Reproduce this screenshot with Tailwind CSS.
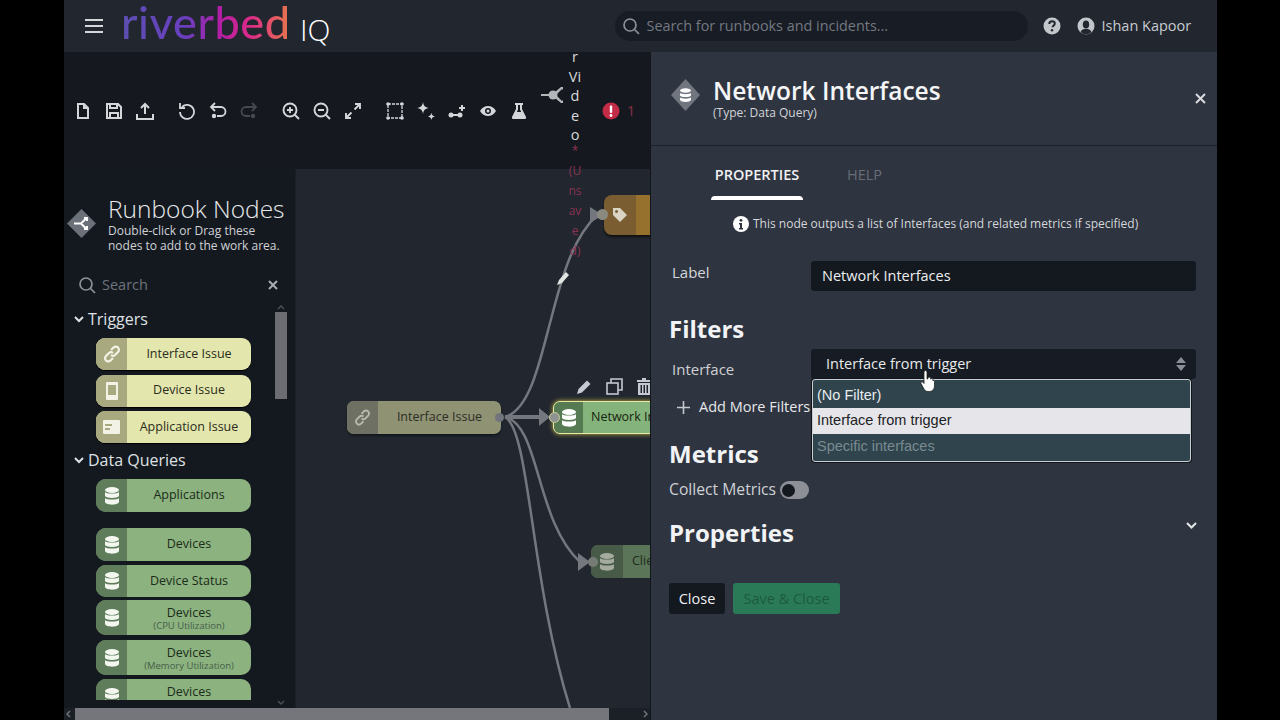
<!DOCTYPE html>
<html lang="en">
<head>
  <meta charset="UTF-8" />
  <title>Riverbed IQ - Runbook editor</title>
  <script src="https://cdn.jsdelivr.net/npm/@tailwindcss/browser@4"></script>
</head>
<body class="bg-black">
<div class="w-[1280px] h-[720px] overflow-hidden bg-black pl-[64px] relative font-['Open_Sans',sans-serif]">
  <div class="w-[1153px] h-[720px] flex flex-col">

    <!-- top bar -->
    <header class="h-[52px] shrink-0 bg-[#21262f] flex items-center">
      <svg class="ml-[21px] w-[18px] h-[14px] text-[#d5d7db]" viewBox="0 0 18 14" fill="currentColor"><rect y="0" width="18" height="2"/><rect y="6" width="18" height="2"/><rect y="12" width="18" height="2"/></svg>
      <div class="ml-[18px] w-[177px] flex items-baseline h-[52px]">
        <span class="text-[45px] leading-[45px] tracking-[0.6px] font-medium font-['Lato',sans-serif] bg-[linear-gradient(90deg,#5a4fb0_0%,#6a3fc0_38%,#b31ea6_58%,#dc2a88_76%,#e8784a_100%)] bg-clip-text text-transparent">riverbed</span>
      </div>
      <span class="ml-[2px] mt-[8px] text-[30px] font-light leading-none text-white">IQ</span>
      <div class="ml-[285px] w-[413px] h-[30px] rounded-full bg-[#181c24] flex items-center pl-[7px]">
        <svg class="w-[18px] h-[18px] text-[#8b9099]" viewBox="0 0 18 18" fill="none" stroke="currentColor" stroke-width="1.7"><circle cx="8" cy="8" r="6"/><path d="M12.5 12.5 17 17"/></svg>
        <span class="ml-[6px] text-[14.400px] text-[#737882]">Search for runbooks and incidents...</span>
      </div>
      <svg class="ml-[15px] w-[18px] h-[18px]" viewBox="0 0 18 18"><circle cx="9" cy="9" r="8.5" fill="#c3c6cb"/><path d="M6.3 7c0-1.700 1.200-2.700 2.800-2.700s2.700.9 2.700 2.300c0 1.900-2.200 1.900-2.200 3.700" fill="none" stroke="#21262f" stroke-width="2"/><circle cx="9" cy="13.300" r="1.200" fill="#21262f"/></svg>
      <svg class="ml-[16px] w-[18px] h-[18px]" viewBox="0 0 18 18"><circle cx="9" cy="9" r="8.500" fill="#c3c6cb"/><ellipse cx="9" cy="7.500" rx="3.200" ry="4" fill="#21262f"/><path d="M3.500 15c1-2.500 3-3 5.500-3s4.500.5 5.500 3a8 8 0 0 1-11 0" fill="#21262f"/></svg>
      <span class="ml-[6px] text-[14.5px] text-[#c8cbd0]">Ishan Kapoor</span>
    </header>

    <div class="flex-1 flex min-h-0">
      <!-- left side: toolbar, node list, canvas -->
      <div class="w-[586px] shrink-0 flex flex-col relative">
        <div class="h-[117px] shrink-0 bg-[#15191f] flex items-center pl-[3px] text-[#d4d6da]">
          <div class="flex w-[31px] justify-center"><svg class="w-[18px] h-[18px]" viewBox="0 0 18 18" fill="none" stroke="currentColor" stroke-width="2"><path d="M4 2h6l4 4v10H4zM10 2v4h4"/></svg></div>
          <div class="flex w-[31px] justify-center"><svg class="w-[18px] h-[18px]" viewBox="0 0 18 18" fill="none" stroke="currentColor" stroke-width="2"><path d="M2 2h11l3 3v11H2zM5 2v4h7V2M5 16v-5h8v5"/></svg></div>
          <div class="flex w-[31px] justify-center"><svg class="w-[18px] h-[18px]" viewBox="0 0 18 18" fill="none" stroke="currentColor" stroke-width="2"><path d="M9 12V2M5 6l4-4 4 4M1 12v5h16v-5"/></svg></div>
          <div class="flex w-[31px] ml-[11px] justify-center"><svg class="w-[18px] h-[18px]" viewBox="0 0 18 18" fill="none" stroke="currentColor" stroke-width="1.800"><path d="M4 5a7 7 0 1 1-2 5M2 1v5h5"/></svg></div>
          <div class="flex w-[31px] justify-center"><svg class="w-[18px] h-[18px]" viewBox="0 0 18 18" fill="none" stroke="currentColor" stroke-width="1.800"><path d="M6 1 2 5l4 4M2 5h10a4 4 0 0 1 0 9H8"/><circle cx="5" cy="14" r="1.300" fill="currentColor"/></svg></div>
          <div class="flex w-[31px] justify-center text-[#454a50]"><svg class="w-[18px] h-[18px]" viewBox="0 0 18 18" fill="none" stroke="currentColor" stroke-width="1.800"><path d="m12 1 4 4-4 4M16 5H6a4 4 0 0 0 0 9h4"/><circle cx="13" cy="14" r="1.300" fill="currentColor"/></svg></div>
          <div class="flex w-[31px] ml-[11px] justify-center"><svg class="w-[18px] h-[18px]" viewBox="0 0 18 18" fill="none" stroke="currentColor" stroke-width="1.900"><circle cx="8" cy="8" r="6.500"/><path d="M12.500 12.500 17 17M8 5v6M5 8h6"/></svg></div>
          <div class="flex w-[31px] justify-center"><svg class="w-[18px] h-[18px]" viewBox="0 0 18 18" fill="none" stroke="currentColor" stroke-width="1.900"><circle cx="8" cy="8" r="6.500"/><path d="M12.500 12.500 17 17M5 8h6"/></svg></div>
          <div class="flex w-[31px] justify-center"><svg class="w-[18px] h-[18px]" viewBox="0 0 18 18" fill="none" stroke="currentColor" stroke-width="1.900"><path d="M11 2h5v5M16 2l-5.500 5.500M7 16H2v-5M2 16l5.500-5.500"/></svg></div>
          <div class="flex w-[31px] ml-[11px] justify-center"><svg class="w-[18px] h-[18px]" viewBox="0 0 18 18" fill="currentColor"><path d="M2 2h14v14H2z" fill="none" stroke="currentColor" stroke-width="1.300" stroke-dasharray="3 1"/><circle cx="2" cy="2" r="1.800"/><circle cx="16" cy="2" r="1.800"/><circle cx="2" cy="16" r="1.800"/><circle cx="16" cy="16" r="1.800"/></svg></div>
          <div class="flex w-[31px] justify-center"><svg class="w-[18px] h-[18px]" viewBox="1 1 15 15" fill="currentColor"><path d="M6 1c.6 3.400 1.600 4.400 5 5-3.400.6-4.400 1.600-5 5-.6-3.400-1.600-4.400-5-5 3.400-.6 4.400-1.600 5-5zM13 10c.4 2 1 2.600 3 3-2 .4-2.600 1-3 3-.4-2-1-2.600-3-3 2-.4 2.600-1 3-3z"/></svg></div>
          <div class="flex w-[31px] justify-center"><svg class="w-[18px] h-[18px]" viewBox="0 0 18 18" fill="currentColor"><circle cx="3" cy="13" r="2.500"/><circle cx="12" cy="13" r="2.500"/><rect x="3" y="12" width="9" height="2"/><path d="M13 3h2v2h2v2h-2v2h-2V7h-2V5h2z"/></svg></div>
          <div class="flex w-[31px] justify-center"><svg class="w-[18px] h-[18px]" viewBox="0 0 18 18"><path d="M1 9c2-3.500 4.800-5 8-5s6 1.500 8 5c-2 3.500-4.800 5-8 5s-6-1.500-8-5z" fill="currentColor"/><circle cx="9" cy="9" r="3" fill="#15191f"/><circle cx="9" cy="9" r="1.500" fill="currentColor"/></svg></div>
          <div class="flex w-[31px] justify-center"><svg class="w-[18px] h-[18px]" viewBox="0 0 18 18" fill="currentColor"><path d="M5 1h8v2h-1v4l4 8c.4 1-.2 2-1.200 2H3.200C2.200 17 1.600 16 2 15l4-8V3H5zM8 3v4.500L6.800 10h4.400L10 7.500V3z"/></svg></div>
          <div class="flex w-[24px] ml-[6px] mb-[31px] justify-center text-[#b4b6ba]"><svg class="w-[24px] h-[22px] shrink-0" viewBox="0 0 24 22" fill="currentColor"><rect x="1" y="10" width="8" height="2"/><circle cx="13" cy="11" r="4.500"/><path d="M15 8 21 3h2v3l-1-1-5 5zM15 14l6 5h2v-3l-1 1-5-5z"/></svg></div>
          <div class="w-[38px]"></div>
          <svg class="w-[18px] h-[18px]" viewBox="0 0 18 18"><circle cx="9" cy="9" r="8.500" fill="#c42b46"/><rect x="7.800" y="3.500" width="2.400" height="7.500" rx="1" fill="#fff"/><circle cx="9" cy="13.500" r="1.400" fill="#fff"/></svg>
          <span class="ml-[7px] text-[14px] text-[#8c2f48]">1</span>
        </div>

        <div class="flex-1 flex min-h-0">
          <!-- node palette -->
          <aside class="w-[231px] shrink-0 bg-[#141920] flex flex-col relative overflow-hidden">
            <div class="flex items-start pl-[3px] pt-[28px]">
              <svg class="mt-[12px] w-[29px] h-[29px]" viewBox="0 0 29 29"><path d="M14.500 0 29 14.500 14.500 29 0 14.500z" fill="#6c7078"/><path d="M7 14.500h7M14 14.500l5-5M14 14.500l5 5M17 9h3v3M17 20h3v-3" stroke="#fff" stroke-width="2" fill="none"/></svg>
              <div class="ml-[12px]">
                <div class="text-[24.500px] leading-[24px] font-light text-[#e8e9eb]">Runbook Nodes</div>
                <div class="mt-[2px] text-[12px] leading-[15px] text-[#d0d2d6]">Double-click or Drag these<br>nodes to add to the work area.</div>
              </div>
            </div>
            <div class="mt-[20px] ml-[14px] w-[200px] flex items-center h-[24px]">
              <svg class="w-[18px] h-[18px] text-[#8b9099]" viewBox="0 0 18 18" fill="none" stroke="currentColor" stroke-width="1.700"><circle cx="8" cy="8" r="6"/><path d="M12.500 12.500 17 17"/></svg>
              <span class="ml-[6px] text-[14.500px] text-[#6e737c]">Search</span>
              <svg class="ml-auto w-[10px] h-[10px] text-[#a9acb2]" viewBox="0 0 10 10" stroke="currentColor" stroke-width="2"><path d="m1 1 8 8M9 1l-8 8"/></svg>
            </div>
            <div class="mt-[10px] h-[393px] shrink-0 overflow-hidden pl-[10px] w-[211px]">
              <div class="flex items-center h-[24px] text-[16px] text-[#dfe1e4]">
                <svg class="w-[10px] h-[7px] mr-[4px]" viewBox="0 0 10 7" fill="none" stroke="currentColor" stroke-width="2"><path d="m1 1 4 4 4-4"/></svg>Triggers
              </div>
              <div class="ml-[22px] w-[155px] mt-[7px] flex flex-col gap-[4.500px] text-[12.500px]">
                <div class="h-[32px] flex rounded-[9px] overflow-hidden bg-[#e3e6ad] text-[#2b2c20] shadow-[0_1px_1px_#000]">
                  <div class="w-[31px] shrink-0 bg-[#a8a97e] flex items-center justify-center"><svg class="w-[18px] h-[18px]" viewBox="0 0 18 18" fill="none" stroke="#f2f2e6" stroke-width="2.200"><path d="M8 5l2.500-2.500a3 3 0 0 1 4.500 4.500l-3 3a3 3 0 0 1-4 0M10 13l-2.500 2.500a3 3 0 0 1-4.500-4.500l3-3a3 3 0 0 1 4 0"/></svg></div>
                  <div class="flex-1 flex items-center justify-center">Interface Issue</div>
                </div>
                <div class="h-[32px] flex rounded-[9px] overflow-hidden bg-[#e3e6ad] text-[#2b2c20] shadow-[0_1px_1px_#000]">
                  <div class="w-[31px] shrink-0 bg-[#a8a97e] flex items-center justify-center"><svg class="w-[12px] h-[18px]" viewBox="0 0 12 18" fill="#f2f2e6"><path d="M1 0h10a1 1 0 0 1 1 1v16a1 1 0 0 1-1 1H1a1 1 0 0 1-1-1V1a1 1 0 0 1 1-1zm1 3v10h8V3z" fill-rule="evenodd"/></svg></div>
                  <div class="flex-1 flex items-center justify-center">Device Issue</div>
                </div>
                <div class="h-[32px] flex rounded-[9px] overflow-hidden bg-[#e3e6ad] text-[#2b2c20] shadow-[0_1px_1px_#000]">
                  <div class="w-[31px] shrink-0 bg-[#a8a97e] flex items-center justify-center"><svg class="w-[17px] h-[14px]" viewBox="0 0 17 14"><rect width="17" height="14" rx="1" fill="#f2f2e6"/><rect x="2" y="4" width="7" height="2" fill="#a8a97e"/><rect x="2" y="8" width="5" height="2" fill="#a8a97e"/></svg></div>
                  <div class="flex-1 flex items-center justify-center">Application Issue</div>
                </div>
              </div>
              <div class="mt-[5px] flex items-center h-[24px] text-[16px] text-[#dfe1e4]">
                <svg class="w-[10px] h-[7px] mr-[4px]" viewBox="0 0 10 7" fill="none" stroke="currentColor" stroke-width="2"><path d="m1 1 4 4 4-4"/></svg>Data Queries
              </div>
              <div class="ml-[22px] w-[155px] mt-[7px] flex flex-col gap-[4px] text-[12.500px] text-[#1b2c1a]">
                <div class="h-[33px] mb-[12px] flex rounded-[10px] overflow-hidden bg-[#8cb27f]">
                  <div class="w-[31px] shrink-0 bg-[#5f7d5a] flex items-center justify-center"><svg class="w-[14px] h-[18px]" viewBox="0 0 14 18" fill="#f4f7f0"><ellipse cx="7" cy="3" rx="7" ry="3"/><path d="M0 5c1 2 13 2 14 0v4c-1 2.500-13 2.500-14 0zM0 11c1 2 13 2 14 0v4c-1 3.500-13 3.500-14 0z"/></svg></div>
                  <div class="flex-1 flex items-center justify-center">Applications</div>
                </div>
                <div class="h-[33px] flex rounded-[10px] overflow-hidden bg-[#8cb27f]">
                  <div class="w-[31px] shrink-0 bg-[#5f7d5a] flex items-center justify-center"><svg class="w-[14px] h-[18px]" viewBox="0 0 14 18" fill="#f4f7f0"><ellipse cx="7" cy="3" rx="7" ry="3"/><path d="M0 5c1 2 13 2 14 0v4c-1 2.500-13 2.500-14 0zM0 11c1 2 13 2 14 0v4c-1 3.500-13 3.500-14 0z"/></svg></div>
                  <div class="flex-1 flex items-center justify-center">Devices</div>
                </div>
                <div class="h-[32px] flex rounded-[10px] overflow-hidden bg-[#8cb27f]">
                  <div class="w-[31px] shrink-0 bg-[#5f7d5a] flex items-center justify-center"><svg class="w-[14px] h-[18px]" viewBox="0 0 14 18" fill="#f4f7f0"><ellipse cx="7" cy="3" rx="7" ry="3"/><path d="M0 5c1 2 13 2 14 0v4c-1 2.500-13 2.500-14 0zM0 11c1 2 13 2 14 0v4c-1 3.500-13 3.500-14 0z"/></svg></div>
                  <div class="flex-1 flex items-center justify-center">Device Status</div>
                </div>
                <div class="h-[35px] mt-[-1px] mb-[1px] flex rounded-[10px] overflow-hidden bg-[#8cb27f]">
                  <div class="w-[31px] shrink-0 bg-[#5f7d5a] flex items-center justify-center"><svg class="w-[14px] h-[18px]" viewBox="0 0 14 18" fill="#f4f7f0"><ellipse cx="7" cy="3" rx="7" ry="3"/><path d="M0 5c1 2 13 2 14 0v4c-1 2.500-13 2.500-14 0zM0 11c1 2 13 2 14 0v4c-1 3.500-13 3.500-14 0z"/></svg></div>
                  <div class="flex-1 flex flex-col items-center justify-center leading-[15px]">Devices<span class="text-[9.500px] leading-[11px] text-[#466048]">(CPU Utilization)</span></div>
                </div>
                <div class="h-[35px] flex rounded-[10px] overflow-hidden bg-[#8cb27f]">
                  <div class="w-[31px] shrink-0 bg-[#5f7d5a] flex items-center justify-center"><svg class="w-[14px] h-[18px]" viewBox="0 0 14 18" fill="#f4f7f0"><ellipse cx="7" cy="3" rx="7" ry="3"/><path d="M0 5c1 2 13 2 14 0v4c-1 2.500-13 2.500-14 0zM0 11c1 2 13 2 14 0v4c-1 3.500-13 3.500-14 0z"/></svg></div>
                  <div class="flex-1 flex flex-col items-center justify-center leading-[15px]">Devices<span class="text-[9.500px] leading-[11px] text-[#466048]">(Memory Utilization)</span></div>
                </div>
                <div class="h-[35px] flex rounded-[10px] overflow-hidden bg-[#8cb27f]">
                  <div class="w-[31px] shrink-0 bg-[#5f7d5a] flex items-center justify-center"><svg class="w-[14px] h-[18px]" viewBox="0 0 14 18" fill="#f4f7f0"><ellipse cx="7" cy="3" rx="7" ry="3"/><path d="M0 5c1 2 13 2 14 0v4c-1 2.500-13 2.500-14 0zM0 11c1 2 13 2 14 0v4c-1 3.500-13 3.500-14 0z"/></svg></div>
                  <div class="flex-1 flex flex-col items-center pt-[5px] leading-[15px]">Devices</div>
                </div>
              </div>
            </div>
            <!-- palette scrollbar -->
            <div class="absolute left-[211px] top-[136px] w-[12px] h-[400px] flex flex-col items-center">
              <svg class="w-[8px] h-[5px] text-[#4a4e55]" viewBox="0 0 8 5" fill="none" stroke="currentColor" stroke-width="1.500"><path d="m1 4 3-3 3 3"/></svg>
              <div class="mt-[2px] w-[12px] h-[87px] bg-[#6b6d73]"></div>
              <svg class="mt-auto w-[8px] h-[5px] text-[#4a4e55]" viewBox="0 0 8 5" fill="none" stroke="currentColor" stroke-width="1.500"><path d="m1 1 3 3 3-3"/></svg>
            </div>
          </aside>

          <!-- canvas -->
          <div class="flex-1 bg-[#21262f] relative overflow-hidden border-l border-[#1a1e25]">
            <svg class="absolute left-0 top-0 w-[354px] h-[539px]" viewBox="296 169 354 539" fill="none" stroke="#74777e" stroke-width="2.500">
              <path d="M505 417C530 410 540 360 550 323S570 240 598 214"/>
              <path d="M505 417H540" stroke-width="4"/>
              <path d="M505 417C540 425 535 520 580 562"/>
              <path d="M505 417C530 430 530 580 570 708"/>
              <path d="M590 207 603 215 590 223z" fill="#74777e" stroke="none"/>
              <path d="M539 408 550 417 539 426z" fill="#74777e" stroke="none"/>
              <path d="M578 553 590 562 578 571z" fill="#74777e" stroke="none"/>
            </svg>

            <div class="absolute left-[308px] top-[26px] w-[60px] h-[40px] flex rounded-[8px] overflow-hidden shadow-[0_2px_2px_#111]">
              <div class="w-[32px] shrink-0 bg-[#7a5d30] flex items-center justify-center"><svg class="w-[16px] h-[16px]" viewBox="0 0 16 16" fill="#d9d4c4"><path d="M1 1h7l7 7-7 7-7-7zM4.500 3a1.500 1.500 0 1 0 .01 0z" fill-rule="evenodd"/></svg></div>
              <div class="flex-1 bg-[#96702d]"></div>
            </div>
            <div class="absolute left-[301px] top-[40px] w-[11px] h-[11px] rounded-full bg-[#8b8a80]"></div>

            <svg class="absolute left-[260px] top-[101px] w-[16px] h-[16px]" viewBox="0 0 16 16"><path d="M1 15l2-5 7-8 3 3-7 8z" fill="#e0e4e2"/></svg>

            <div class="absolute left-[51px] top-[232px] w-[154px] h-[33px] flex rounded-[7px] overflow-hidden bg-[#8f9273] text-[#2c2d25] text-[12.500px] shadow-[0_2px_2px_#15181e]">
              <div class="w-[31px] shrink-0 bg-[#6d7062] flex items-center justify-center"><svg class="w-[17px] h-[17px]" viewBox="0 0 18 18" fill="none" stroke="#b8b9ab" stroke-width="2"><path d="M8 5l2.500-2.500a3 3 0 0 1 4.500 4.500l-3 3a3 3 0 0 1-4 0M10 13l-2.500 2.500a3 3 0 0 1-4.500-4.500l3-3a3 3 0 0 1 4 0"/></svg></div>
              <div class="flex-1 flex items-center justify-center">Interface Issue</div>
            </div>
            <div class="absolute left-[199px] top-[244px] w-[9px] h-[9px] rounded-full bg-[#71747b]"></div>

            <div class="absolute left-[280px] top-[209px] w-[82px] flex items-center gap-[14px] text-[#c5c9d2]">
              <svg class="w-[16px] h-[16px] shrink-0" viewBox="0 0 16 16" fill="currentColor"><path d="M1 15l1.500-5L11 1.500l3.500 3.500L6 13.500z"/></svg>
              <svg class="w-[17px] h-[17px] shrink-0" viewBox="0 0 17 17" fill="none" stroke="currentColor" stroke-width="1.600"><rect x="1" y="5" width="11" height="11"/><path d="M5 5V1h11v11h-4"/></svg>
              <svg class="w-[14px] h-[17px] shrink-0" viewBox="0 0 14 17" fill="currentColor"><rect y="2" width="14" height="2"/><rect x="5" width="4" height="2"/><path d="M1 5h12v12H1zM3.500 7v8h1.500V7zM6.500 7v8h1.500V7zM9.500 7v8h1.500V7z" fill-rule="evenodd"/></svg>
            </div>

            <div class="absolute left-[257px] top-[232px] w-[110px] h-[33px] flex rounded-[7px] overflow-hidden bg-[#85b37c] border border-[#e9eaa2] shadow-[0_0_5px_#c8b84a] text-[12.500px] text-[#16240f]">
              <div class="w-[29px] shrink-0 bg-[#567a52] flex items-center justify-center"><svg class="w-[14px] h-[18px]" viewBox="0 0 14 18" fill="#fff"><ellipse cx="7" cy="3" rx="7" ry="3"/><path d="M0 5c1 2 13 2 14 0v4c-1 2.500-13 2.500-14 0zM0 11c1 2 13 2 14 0v4c-1 3.500-13 3.500-14 0z"/></svg></div>
              <div class="pl-[8px] flex items-center whitespace-nowrap">Network Interfaces</div>
            </div>
            <div class="absolute left-[253px] top-[243px] w-[11px] h-[11px] rounded-full bg-[#8f9490] border border-[#c9ca9d]"></div>

            <div class="absolute left-[295px] top-[376px] w-[70px] h-[33px] flex rounded-[7px] overflow-hidden bg-[#5a7557] text-[12.500px] text-[#202b1e]">
              <div class="w-[32px] shrink-0 bg-[#475b48] flex items-center justify-center"><svg class="w-[14px] h-[18px]" viewBox="0 0 14 18" fill="#a5ac9f"><ellipse cx="7" cy="3" rx="7" ry="3"/><path d="M0 5c1 2 13 2 14 0v4c-1 2.500-13 2.500-14 0zM0 11c1 2 13 2 14 0v4c-1 3.500-13 3.500-14 0z"/></svg></div>
              <div class="pl-[9px] flex items-center whitespace-nowrap">Client</div>
            </div>
            <div class="absolute left-[292px] top-[388px] w-[10px] h-[10px] rounded-full bg-[#777b76]"></div>
          </div>
        </div>

        <!-- runbook name squeezed into a narrow column, runs over the canvas -->
        <div class="absolute left-[496px] top-0 w-[30px] h-[210px] overflow-hidden text-center">
          <div class="mt-[-5px] text-[14.500px] leading-[19.500px] text-[#d7d9dc]">r<br>Vi<br>d<br>e<br>o</div>
          <div class="mt-[-4px] text-[12px] leading-[20px] text-[#8a3350]">*<br>(U<br>ns<br>av<br>e<br>d)</div>
        </div>

        <!-- bottom scrollbar -->
        <div class="absolute left-0 bottom-0 w-[586px] h-[12px] bg-[#1b1f26] flex items-center">
          <svg class="ml-[2px] w-[5px] h-[8px] text-[#70747a]" viewBox="0 0 5 8" fill="none" stroke="currentColor" stroke-width="1.500"><path d="M4 1 1 4l3 3"/></svg>
          <div class="ml-[4px] w-[534px] h-[12px] bg-[#74767c]"></div>
          <svg class="ml-auto mr-[2px] w-[5px] h-[8px] text-[#70747a]" viewBox="0 0 5 8" fill="none" stroke="currentColor" stroke-width="1.500"><path d="m1 1 3 3-3 3"/></svg>
        </div>
      </div>

      <!-- properties panel -->
      <section class="flex-1 bg-[#2e3440] border-l border-[#12151a] relative">
        <div class="h-[94px] border-b border-[#1c2029] flex items-start pl-[20px]">
          <svg class="mt-[27px] w-[29px] h-[32px]" viewBox="0 0 29 32"><path d="M14.500 0 29 16 14.500 32 0 16z" fill="#70757e"/><ellipse cx="14.500" cy="11.500" rx="5.500" ry="2.200" fill="#fff"/><path d="M9 14c1 1.500 10 1.500 11 0v2.500c-1 2-10 2-11 0zM9 18.500c1 1.500 10 1.500 11 0V21c-1 2.500-10 2.500-11 0z" fill="#fff"/></svg>
          <div class="ml-[13px] mt-[22px]">
            <div class="text-[24.500px] leading-[33px] font-semibold text-[#f4f5f6]">Network Interfaces</div>
            <div class="text-[12px] leading-[14px] mt-[-1px] text-[#d2d4d8]">(Type: Data Query)</div>
          </div>
          <svg class="ml-auto mr-[11px] mt-[41px] w-[11px] h-[11px] text-[#d8dadd]" viewBox="0 0 11 11" stroke="currentColor" stroke-width="2"><path d="m1 1 9 9M10 1l-9 9"/></svg>
        </div>
        <div class="pl-[60px] h-[54px] flex text-[14.500px]">
          <div class="w-[92px] h-[54px] flex flex-col items-center">
            <span class="mt-[19px] leading-[20px] font-semibold text-[#f0f1f3]">PROPERTIES</span>
            <span class="mt-auto w-[92px] h-[4px] bg-white rounded-t-[4px]"></span>
          </div>
          <span class="ml-[44px] mt-[19px] leading-[20px] text-[#686d77]">HELP</span>
        </div>
        <div class="mt-[15px] pl-[82px] flex items-center h-[18px] text-[12px] text-[#d5d7da]">
          <svg class="w-[16px] h-[16px] mr-[4px]" viewBox="0 0 16 16"><circle cx="8" cy="8" r="8" fill="#fff"/><circle cx="8" cy="4.300" r="1.400" fill="#2e3440"/><path d="M6 7h3v5h1v1.500H6V12h1V8.500H6z" fill="#2e3440"/></svg>
          This node outputs a list of Interfaces (and related metrics if specified)
        </div>
        <div class="mt-[28px] flex pl-[21px] pr-[21px]">
          <span class="mt-[-1px] w-[139px] text-[15px] leading-[24px] text-[#d5d7da]">Label</span>
          <div class="flex-1 h-[30px] rounded-[3px] bg-[#14181f] pl-[11px] flex items-center text-[14.500px] text-[#eceef0]">Network Interfaces</div>
        </div>
        <h2 class="mt-[23px] pl-[18px] text-[24px] leading-[30px] font-bold text-[#f2f3f5]">Filters</h2>
        <div class="mt-[5px] flex pl-[21px] pr-[21px]">
          <span class="mt-[8px] w-[139px] text-[15px] leading-[24px] text-[#cfd1d5]">Interface</span>
          <div class="flex-1 h-[30px] rounded-[3px] bg-[#171b23] pl-[15px] pr-[10px] flex items-center text-[14.500px] text-[#e8eaec]">
            Interface from trigger
            <svg class="ml-auto w-[10px] h-[14px] text-[#8a8e96]" viewBox="0 0 10 14" fill="currentColor"><path d="M5 0l5 6H0zM5 14 0 8h10z"/></svg>
          </div>
        </div>
        <div class="mt-[14px] pl-[26px] flex items-center h-[24px] text-[14.500px] text-[#e6e8ea]">
          <svg class="w-[13px] h-[13px] mr-[9px] text-[#c5c8cd]" viewBox="0 0 13 13" stroke="currentColor" stroke-width="1.600"><path d="M6.500 0v13M0 6.500h13"/></svg>
          Add More Filters
        </div>
        <h2 class="mt-[20px] pl-[18px] text-[24px] leading-[30px] font-bold text-[#f2f3f5]">Metrics</h2>
        <div class="mt-[9px] pl-[18px] flex items-center h-[24px] text-[15.700px] text-[#cfd1d5]">
          Collect Metrics
          <span class="ml-[4px] w-[29px] h-[18px] rounded-full bg-[#8d9096] flex items-center pl-[2px]"><span class="w-[13px] h-[13px] rounded-full bg-[#14181f]"></span></span>
        </div>
        <div class="mt-[14px] pl-[18px] pr-[21px] flex items-start">
          <h2 class="text-[24px] leading-[33px] font-bold text-[#f2f3f5]">Properties</h2>
          <svg class="ml-auto mt-[6px] mr-[-1px] w-[11px] h-[8px] text-[#e4e6e8]" viewBox="0 0 11 8" fill="none" stroke="currentColor" stroke-width="2"><path d="m1 1 4.500 4.500L10 1"/></svg>
        </div>
        <div class="mt-[34px] pl-[18px] flex gap-[8px] text-[14.500px]">
          <button class="w-[56px] h-[31px] rounded-[3px] bg-[#14181f] text-[#eef0f2]">Close</button>
          <button class="w-[107px] h-[31px] rounded-[3px] bg-[#2a7a57] text-[#1c5a40]">Save &amp; Close</button>
        </div>

        <!-- open select menu -->
        <div class="absolute left-[161px] top-[327px] w-[379px] h-[83px] rounded-[3px] border border-[#c9ced2] shadow-[0_0_0_1px_#12151a] bg-[#2f444d] pt-[3px] font-['Liberation_Sans',sans-serif] text-[14.500px]">
          <div class="h-[25px] pl-[4px] flex items-center text-[#e8ebed]">(No Filter)</div>
          <div class="h-[26px] pl-[4px] flex items-center bg-[#e6e6ea] text-[#202226]">Interface from trigger</div>
          <div class="h-[25px] pl-[4px] flex items-center text-[#7a8a90]">Specific interfaces</div>
        </div>
      </section>
    </div>
  </div>

  <!-- mouse pointer -->
  <svg class="absolute left-[920px] top-[370px] w-[15px] h-[22px]" viewBox="0 0 15 22"><path d="M4 2a1.500 1.500 0 0 1 3 0v7l1-.3V8a1.300 1.300 0 0 1 2.500 0v1a1.300 1.300 0 0 1 2.300.5v1a1.200 1.200 0 0 1 1.700 1V16c0 3-2 5.500-5 5.500H8c-2.500 0-3.500-1.500-4.500-3.500L1 13.500c-.6-1.200 1-2.300 2-1.200l1 1.200z" fill="#fff" stroke="#222" stroke-width=".8"/></svg>
</div>
</body>
</html>
